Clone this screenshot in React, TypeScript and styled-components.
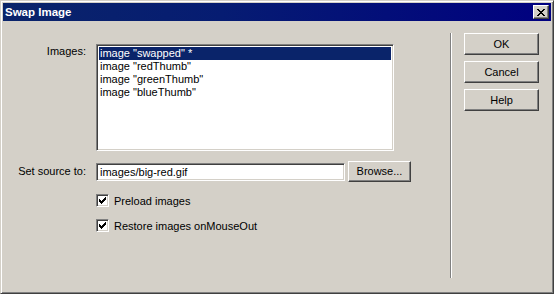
import React from "react";
import styled, { createGlobalStyle } from "styled-components";

const Global = createGlobalStyle`
  html, body { margin: 0; padding: 0; background: #d4d0c8; }
  body { font-family: "Liberation Sans", Arial, sans-serif; font-size: 11px; color: #000; }
`;

const Window = styled.div`
  box-sizing: border-box;
  width: 554px;
  height: 294px;
  background: #d4d0c8;
  border-top: 1px solid #d4d0c8;
  border-left: 1px solid #d4d0c8;
  border-right: 1px solid #404040;
  border-bottom: 1px solid #404040;
  box-shadow: inset 1px 1px 0 #fff, inset -1px -1px 0 #808080;
  padding: 2px;
  display: flex;
  flex-direction: column;
`;

const TitleBar = styled.div`
  height: 18px;
  flex: none;
  background: linear-gradient(to right, #0a246a 0%, #061c72 40%, #000080 100%);
  display: flex;
  align-items: center;
  justify-content: space-between;
  padding: 0 2px 0 2px;
`;

const Title = styled.span`
  color: #fff;
  font-weight: bold;
  font-size: 11.5px;
`;

const CloseButton = styled.div`
  box-sizing: border-box;
  width: 16px;
  height: 14px;
  background: #d4d0c8;
  border-top: 1px solid #fff;
  border-left: 1px solid #fff;
  border-right: 1px solid #404040;
  border-bottom: 1px solid #404040;
  box-shadow: inset -1px -1px 0 #808080;
  display: flex;
  align-items: center;
  justify-content: center;
`;

const Body = styled.div`
  flex: 1;
  display: flex;
  flex-direction: row;
  align-items: flex-start;
`;

const Form = styled.div`
  width: 447px;
  padding-top: 23px;
  display: grid;
  grid-template-columns: 83px auto;
  column-gap: 10px;
  row-gap: 0;
  align-items: start;
  justify-content: start;
`;

const Label = styled.div<{ $top?: number }>`
  text-align: right;
  padding-top: ${(p) => p.$top ?? 0}px;
  white-space: nowrap;
`;

const ListBox = styled.div`
  box-sizing: border-box;
  width: 298px;
  height: 107px;
  background: #fff;
  border-top: 1px solid #808080;
  border-left: 1px solid #808080;
  border-right: 1px solid #fff;
  border-bottom: 1px solid #fff;
  box-shadow: inset 1px 1px 0 #404040, inset -1px -1px 0 #d4d0c8;
  padding: 2px 2px;
`;

const ListItem = styled.div<{ $selected?: boolean }>`
  height: 13px;
  line-height: 13px;
  padding-left: 1px;
  white-space: nowrap;
  background: ${(p) => (p.$selected ? "#0a246a" : "transparent")};
  color: ${(p) => (p.$selected ? "#fff" : "#000")};
`;

const SourceRow = styled.div`
  display: flex;
  align-items: center;
  gap: 3px;
  margin-top: 10px;
`;

const TextInput = styled.div`
  box-sizing: border-box;
  width: 249px;
  height: 18px;
  background: #fff;
  border-top: 1px solid #808080;
  border-left: 1px solid #808080;
  border-right: 1px solid #fff;
  border-bottom: 1px solid #fff;
  box-shadow: inset 1px 1px 0 #404040, inset -1px -1px 0 #d4d0c8;
  padding: 0 3px;
  line-height: 16px;
  white-space: nowrap;
`;

const Button = styled.div<{ $w: number; $h: number }>`
  box-sizing: border-box;
  width: ${(p) => p.$w}px;
  height: ${(p) => p.$h}px;
  background: #d4d0c8;
  border-top: 1px solid #fff;
  border-left: 1px solid #fff;
  border-right: 1px solid #404040;
  border-bottom: 1px solid #404040;
  box-shadow: inset -1px -1px 0 #808080;
  display: flex;
  align-items: center;
  justify-content: center;
  padding-bottom: 1px;
`;

const CheckRow = styled.div<{ $mt: number }>`
  display: flex;
  align-items: center;
  gap: 5px;
  margin-top: ${(p) => p.$mt}px;
  height: 13px;
`;

const CheckBox = styled.div`
  box-sizing: border-box;
  width: 13px;
  height: 13px;
  background: #fff;
  border-top: 1px solid #808080;
  border-left: 1px solid #808080;
  border-right: 1px solid #fff;
  border-bottom: 1px solid #fff;
  box-shadow: inset 1px 1px 0 #404040, inset -1px -1px 0 #d4d0c8;
  display: flex;
  align-items: center;
  justify-content: center;
`;

const Separator = styled.div`
  width: 1px;
  height: 245px;
  margin-top: 12px;
  background: #808080;
  border-right: 1px solid #fff;
`;

const ButtonColumn = styled.div`
  display: flex;
  flex-direction: column;
  gap: 6px;
  margin-top: 12px;
  margin-left: 12px;
`;

const Check = () => (
  <svg width="7" height="7" viewBox="0 0 7 7" shapeRendering="crispEdges">
    <path
      d="M6 0h1v3h-1zM5 1h1v3h-1zM4 2h1v3h-1zM3 3h1v3h-1zM2 4h1v3h-1zM1 3h1v3h-1zM0 2h1v3h-1z"
      fill="#000"
    />
  </svg>
);

const CloseX = () => (
  <svg width="8" height="7" viewBox="0 0 8 7" shapeRendering="crispEdges">
    <path
      d="M0 0h2v1h-2zM6 0h2v1h-2zM1 1h2v1h-2zM5 1h2v1h-2zM2 2h4v1h-4zM3 3h2v1h-2zM2 4h4v1h-4zM1 5h2v1h-2zM5 5h2v1h-2zM0 6h2v1h-2zM6 6h2v1h-2z"
      fill="#000"
    />
  </svg>
);

export default function App() {
  const items = ['image "swapped" *', 'image "redThumb"', 'image "greenThumb"', 'image "blueThumb"'];
  return (
    <>
      <Global />
      <Window>
        <TitleBar>
          <Title>Swap Image</Title>
          <CloseButton>
            <CloseX />
          </CloseButton>
        </TitleBar>
        <Body>
          <Form>
            <Label $top={1}>Images:</Label>
            <ListBox>
              {items.map((t, i) => (
                <ListItem key={t} $selected={i === 0}>
                  {t}
                </ListItem>
              ))}
            </ListBox>
            <Label $top={14}>Set source to:</Label>
            <SourceRow>
              <TextInput>images/big-red.gif</TextInput>
              <Button $w={63} $h={21}>Browse...</Button>
            </SourceRow>
            <div />
            <CheckRow $mt={12}>
              <CheckBox>
                <Check />
              </CheckBox>
              <span>Preload images</span>
            </CheckRow>
            <div />
            <CheckRow $mt={12}>
              <CheckBox>
                <Check />
              </CheckBox>
              <span>Restore images onMouseOut</span>
            </CheckRow>
          </Form>
          <Separator />
          <ButtonColumn>
            <Button $w={75} $h={22}>OK</Button>
            <Button $w={75} $h={22}>Cancel</Button>
            <Button $w={75} $h={22}>Help</Button>
          </ButtonColumn>
        </Body>
      </Window>
    </>
  );
}
